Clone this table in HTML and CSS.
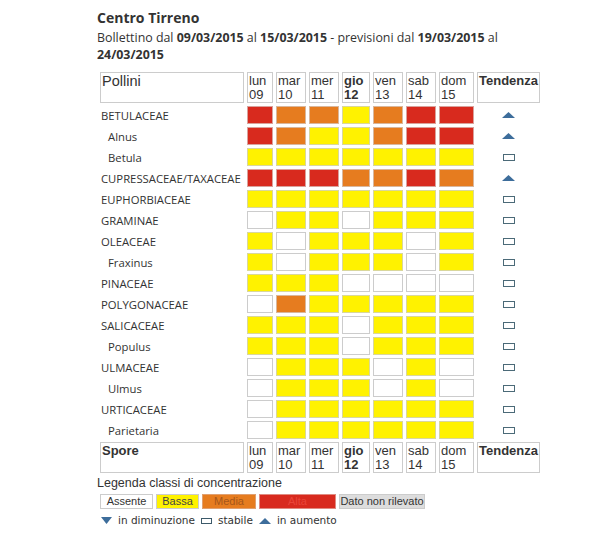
FILE: index.html
```html
<!DOCTYPE html>
<html lang="it">
<head>
<meta charset="utf-8">
<title>Centro Tirreno</title>
<link rel="stylesheet" href="styles.css">
</head>
<body>
<div class="page">
  <h2 class="title">Centro Tirreno</h2>
  <p class="bulletin">Bollettino dal <b>09/03/2015</b> al <b>15/03/2015</b> - previsioni dal <b>19/03/2015</b> al <b>24/03/2015</b></p>

  <div class="grid">
    <div class="h big">Pollini</div>
    <div class="h">lun<br>09</div>
    <div class="h">mar<br>10</div>
    <div class="h">mer<br>11</div>
    <div class="h cur">gio<br>12</div>
    <div class="h">ven<br>13</div>
    <div class="h">sab<br>14</div>
    <div class="h">dom<br>15</div>
    <div class="h bold">Tendenza</div>

    <div class="lab">BETULACEAE</div>
    <div class="c r"></div><div class="c o"></div><div class="c o"></div><div class="c y"></div><div class="c o"></div><div class="c r"></div><div class="c r"></div>
    <div class="t"><svg class="up" width="13" height="6" viewBox="0 0 13 6"><path d="M6.5 0L13 6H0Z"/></svg></div>

    <div class="lab sub">Alnus</div>
    <div class="c r"></div><div class="c o"></div><div class="c y"></div><div class="c y"></div><div class="c o"></div><div class="c r"></div><div class="c r"></div>
    <div class="t"><svg class="up" width="13" height="6" viewBox="0 0 13 6"><path d="M6.5 0L13 6H0Z"/></svg></div>

    <div class="lab sub">Betula</div>
    <div class="c y"></div><div class="c y"></div><div class="c y"></div><div class="c y"></div><div class="c y"></div><div class="c y"></div><div class="c y"></div>
    <div class="t"><span class="st"></span></div>

    <div class="lab">CUPRESSACEAE/TAXACEAE</div>
    <div class="c r"></div><div class="c r"></div><div class="c r"></div><div class="c o"></div><div class="c o"></div><div class="c r"></div><div class="c o"></div>
    <div class="t"><svg class="up" width="13" height="6" viewBox="0 0 13 6"><path d="M6.5 0L13 6H0Z"/></svg></div>

    <div class="lab">EUPHORBIACEAE</div>
    <div class="c y"></div><div class="c y"></div><div class="c y"></div><div class="c y"></div><div class="c y"></div><div class="c y"></div><div class="c y"></div>
    <div class="t"><span class="st"></span></div>

    <div class="lab">GRAMINAE</div>
    <div class="c"></div><div class="c y"></div><div class="c y"></div><div class="c"></div><div class="c y"></div><div class="c y"></div><div class="c y"></div>
    <div class="t"><span class="st"></span></div>

    <div class="lab">OLEACEAE</div>
    <div class="c y"></div><div class="c"></div><div class="c y"></div><div class="c y"></div><div class="c y"></div><div class="c"></div><div class="c y"></div>
    <div class="t"><span class="st"></span></div>

    <div class="lab sub">Fraxinus</div>
    <div class="c y"></div><div class="c"></div><div class="c y"></div><div class="c y"></div><div class="c y"></div><div class="c"></div><div class="c y"></div>
    <div class="t"><span class="st"></span></div>

    <div class="lab">PINACEAE</div>
    <div class="c y"></div><div class="c y"></div><div class="c y"></div><div class="c"></div><div class="c"></div><div class="c"></div><div class="c"></div>
    <div class="t"><span class="st"></span></div>

    <div class="lab">POLYGONACEAE</div>
    <div class="c"></div><div class="c o"></div><div class="c y"></div><div class="c y"></div><div class="c y"></div><div class="c y"></div><div class="c y"></div>
    <div class="t"><span class="st"></span></div>

    <div class="lab">SALICACEAE</div>
    <div class="c y"></div><div class="c y"></div><div class="c y"></div><div class="c"></div><div class="c y"></div><div class="c y"></div><div class="c y"></div>
    <div class="t"><span class="st"></span></div>

    <div class="lab sub">Populus</div>
    <div class="c y"></div><div class="c y"></div><div class="c y"></div><div class="c"></div><div class="c y"></div><div class="c y"></div><div class="c y"></div>
    <div class="t"><span class="st"></span></div>

    <div class="lab">ULMACEAE</div>
    <div class="c"></div><div class="c y"></div><div class="c y"></div><div class="c y"></div><div class="c"></div><div class="c y"></div><div class="c"></div>
    <div class="t"><span class="st"></span></div>

    <div class="lab sub">Ulmus</div>
    <div class="c"></div><div class="c y"></div><div class="c y"></div><div class="c y"></div><div class="c"></div><div class="c y"></div><div class="c"></div>
    <div class="t"><span class="st"></span></div>

    <div class="lab">URTICACEAE</div>
    <div class="c"></div><div class="c y"></div><div class="c y"></div><div class="c y"></div><div class="c y"></div><div class="c y"></div><div class="c y"></div>
    <div class="t"><span class="st"></span></div>

    <div class="lab sub">Parietaria</div>
    <div class="c"></div><div class="c y"></div><div class="c y"></div><div class="c y"></div><div class="c y"></div><div class="c y"></div><div class="c y"></div>
    <div class="t"><span class="st"></span></div>

    <div class="h bold">Spore</div>
    <div class="h">lun<br>09</div>
    <div class="h">mar<br>10</div>
    <div class="h">mer<br>11</div>
    <div class="h cur">gio<br>12</div>
    <div class="h">ven<br>13</div>
    <div class="h">sab<br>14</div>
    <div class="h">dom<br>15</div>
    <div class="h bold">Tendenza</div>
  </div>

  <div class="legend-title">Legenda classi di concentrazione</div>
  <div class="legend">
    <span class="lg lg-w">Assente</span>
    <span class="lg lg-y">Bassa</span>
    <span class="lg lg-o">Media</span>
    <span class="lg lg-r">Alta</span>
    <span class="lg lg-n">Dato non rilevato</span>
  </div>
  <div class="trend-legend">
    <svg class="ic down" width="11" height="7" viewBox="0 0 11 7"><path d="M0 0H11L5.5 7Z"/></svg>
    <span class="tl">in diminuzione</span>
    <span class="st st-sm"></span>
    <span class="tl">stabile</span>
    <svg class="ic up" width="12" height="6" viewBox="0 0 12 6"><path d="M6 0L12 6H0Z"/></svg>
    <span class="tl">in aumento</span>
  </div>
</div>
</body>
</html>
```

FILE: styles.css
```css
* { box-sizing: border-box; }
body {
  margin: 0;
  background: #fff;
  color: #333;
}
.page {
  padding: 8px 0 0 97px;
  width: 546px;
}
.title {
  margin: 0;
  font: bold 14px/20px "Open Sans", sans-serif;
  color: #333;
}
.bulletin {
  margin: 1px 0 0;
  font: 12.4px/17px "Open Sans", sans-serif;
  color: #333;
}
.grid {
  display: grid;
  grid-template-columns: 144px 26px 30px 30px 28px 30px 30px 35px 63px;
  grid-template-rows: 31px repeat(16, 18px) 31px;
  gap: 3px;
  margin: 9px 0 0 3px;
  width: 440px;
}
.h {
  border: 1px solid #ccc;
  padding: 1px 1px 0;
  font: 13px/14px "Liberation Sans", Arial, sans-serif;
  color: #333;
}
.big { font-size: 14.5px; }
.bold, .cur { font-weight: bold; }
.lab {
  display: flex;
  align-items: center;
  padding-left: 1px;
  font: 11.3px "Open Sans", sans-serif;
  color: #333;
  white-space: nowrap;
}
.sub { padding-left: 8px; }
.c { border: 1px solid #ccc; background: #fff; }
.y { background: #fff200; border-color: #d9d79c; }
.o { background: #e67c1f; border-color: #d9b79c; }
.r { background: #d82a1e; border-color: #d9a29c; }
.t {
  display: flex;
  align-items: center;
  justify-content: center;
}
.up path, .down path { fill: #3d6d9b; }
.st {
  display: block;
  width: 12px;
  height: 7px;
  border: 1.5px solid #4b6a78;
}
.legend-title {
  margin-top: 3px;
  font: 12.5px/15px "Liberation Sans", Arial, sans-serif;
  color: #333;
}
.legend {
  display: flex;
  gap: 3px;
  margin: 3px 0 0 3px;
}
.lg {
  display: block;
  height: 15px;
  border: 1px solid #ccc;
  font: 11px/13px "Liberation Sans", Arial, sans-serif;
  text-align: center;
  color: #333;
}
.lg-w { width: 53px; background: #fff; }
.lg-y { width: 43px; background: #fff200; color: #444; }
.lg-o { width: 54px; background: #e67c1f; color: #a5561a; border-color: #e0a070; }
.lg-r { width: 77px; background: #d82a1e; color: #ea4438; border-color: #e08a80; }
.lg-n { width: 86px; background: #ddd; }
.trend-legend {
  display: flex;
  align-items: center;
  margin-top: 3px;
  height: 16px;
  padding-left: 4px;
  font: 10.5px/16px "DejaVu Sans", Verdana, sans-serif;
  color: #333;
}
.ic { display: block; margin-top: 1px; }
.tl { margin: 0 6px 0 6px; }
.st-sm {
  width: 11px;
  height: 6px;
  border-width: 1px;
  border-color: #3d5a6a;
  margin-top: 1px;
}
```
